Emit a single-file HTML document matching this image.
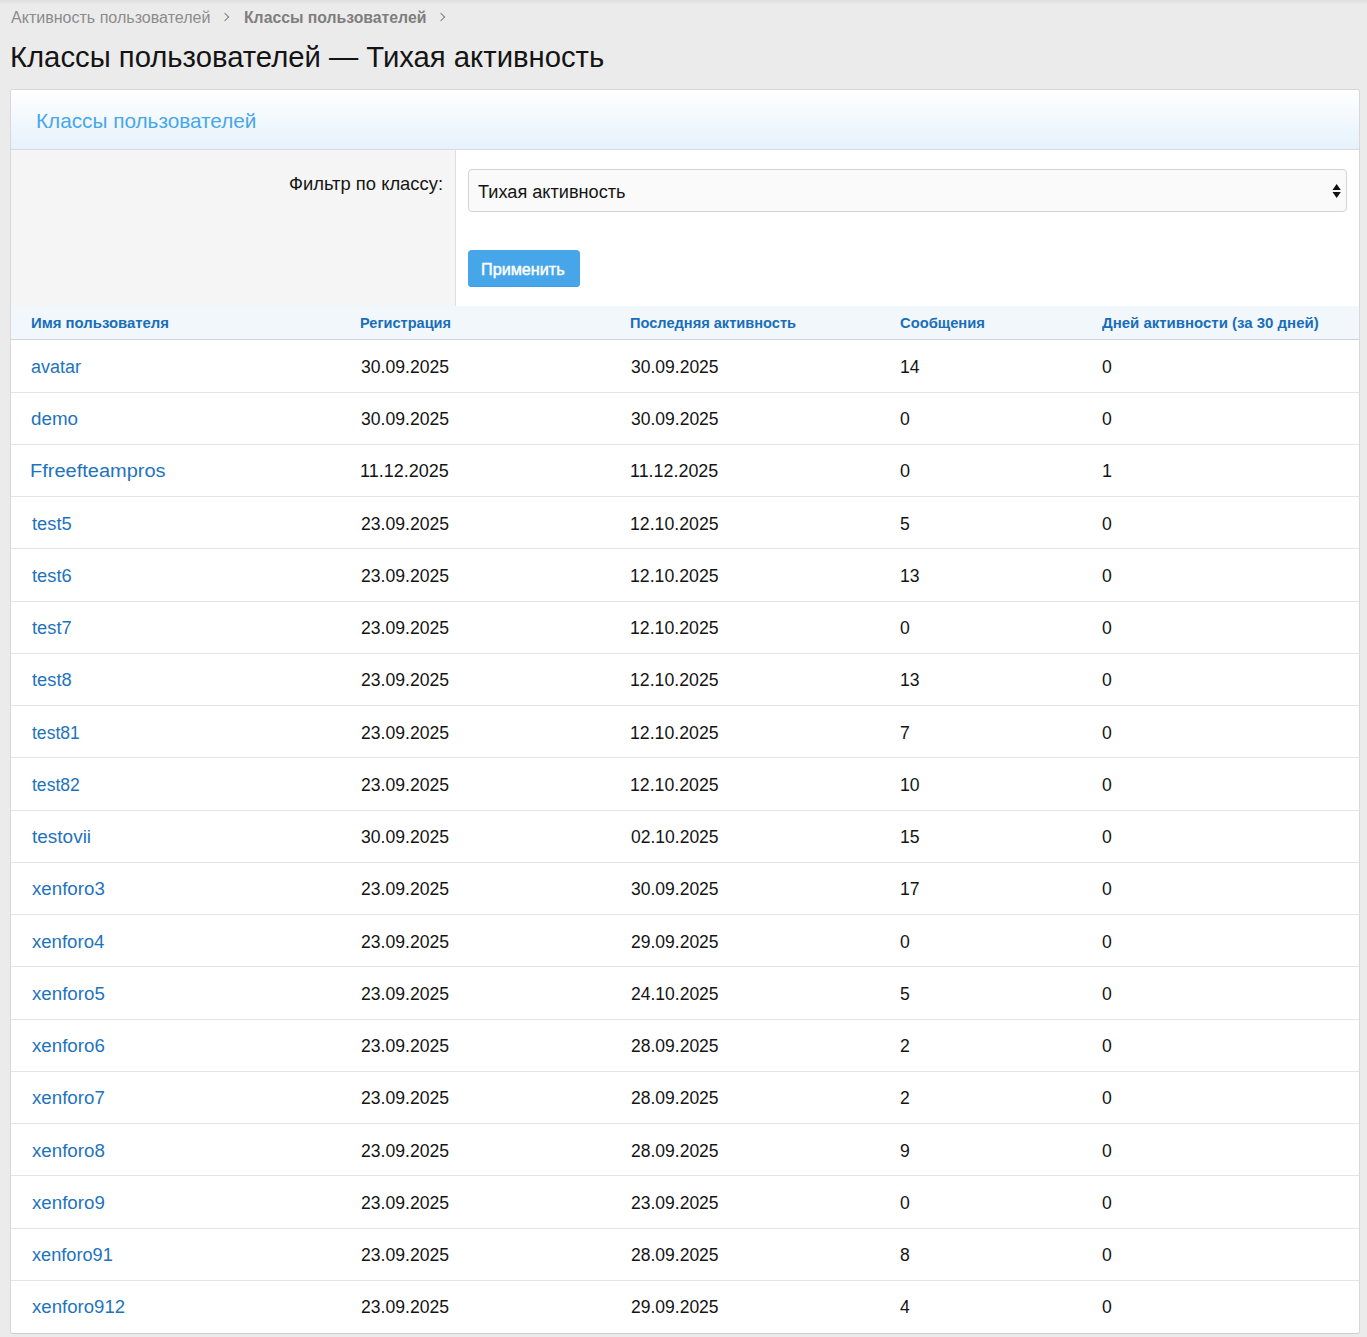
<!DOCTYPE html><html><head><meta charset="utf-8"><style>
*{box-sizing:border-box;margin:0;padding:0}
html,body{width:1367px;height:1337px;overflow:hidden}
body{background:#ebebeb;font-family:"Liberation Sans",sans-serif;color:#141414;position:relative}
.a{position:absolute;white-space:nowrap;line-height:1;transform-origin:0 0}
.topsh{position:absolute;left:0;top:0;width:1367px;height:5px;background:linear-gradient(rgba(0,0,0,.055),rgba(0,0,0,0))}
.crumb{color:#8c8c8c}
.crumbb{color:#7e7e7e;font-weight:bold}
.chev{position:absolute;width:6px;height:6px;border-right:1.6px solid #808080;border-top:1.6px solid #808080;transform:rotate(45deg)}
.title{color:#141414}
.block{position:absolute;left:10px;top:89px;width:1350px;height:1245px;border:1px solid #d8d8d8;border-bottom-color:#cdcdcd;border-radius:3px;background:#fff;overflow:hidden}
.hdr{position:absolute;left:0;top:0;width:1348px;height:60px;background:linear-gradient(#fefefe 4%,#e5f2fc 100%);border-bottom:1px solid #dadada}
.hdrt{color:#47a7eb}
.lab{position:absolute;left:0;top:60px;width:445px;height:156px;background:#f5f5f5;border-right:1px solid #dedede}
.labt{color:#141414}
.sel{position:absolute;left:457px;top:79px;width:879px;height:43px;background:#fafafa;border:1px solid #d3d3d3;border-radius:4px}
.selt{color:#141414}
.btn{position:absolute;left:457px;top:160px;width:112px;height:37px;background:#47a6ea;border-radius:4px;box-shadow:inset 0 -1px 0 #3a9de8}
.btnt{color:#fff;-webkit-text-stroke:0.45px #fff}
.th{position:absolute;left:0;top:216px;width:1348px;height:34px;background:#f2f7fc;border-bottom:1px solid #d3d3d3}
.tht{color:#186eb9;font-weight:bold}
.rl{position:absolute;left:0;width:1348px;height:1px;background:#e5e5e5}
.td{color:#141414}
.lnk{color:#1e73bd}
</style></head><body>
<div class="topsh"></div>
<div class="chev" style="left:222px;top:14px"></div>
<div class="chev" style="left:438px;top:14px"></div>
<div class="block">
<div class="hdr"></div>
<div class="lab"></div>
<div class="sel"><svg style="position:absolute;left:862px;top:13px" width="12" height="16" viewBox="0 0 12 16"><path d="M5.65 0.9 L9.8 6.9 H1.5 Z M1.5 8.9 H9.8 L5.65 14.9 Z" fill="#111"/></svg></div>
<div class="btn"></div>
<div class="th"></div>
<div class="rl" style="top:302px"></div>
<div class="rl" style="top:354px"></div>
<div class="rl" style="top:406px"></div>
<div class="rl" style="top:458px"></div>
<div class="rl" style="top:511px"></div>
<div class="rl" style="top:563px"></div>
<div class="rl" style="top:615px"></div>
<div class="rl" style="top:667px"></div>
<div class="rl" style="top:720px"></div>
<div class="rl" style="top:772px"></div>
<div class="rl" style="top:824px"></div>
<div class="rl" style="top:876px"></div>
<div class="rl" style="top:929px"></div>
<div class="rl" style="top:981px"></div>
<div class="rl" style="top:1033px"></div>
<div class="rl" style="top:1085px"></div>
<div class="rl" style="top:1138px"></div>
<div class="rl" style="top:1190px"></div>
</div>
<div id="crumb1" class="a crumb" style="left:10.50px;top:9.90px;font-size:16px;transform:scaleX(1.0025);">Активность пользователей</div>
<div id="crumb2" class="a crumbb" style="left:244.01px;top:9.80px;font-size:16px;transform:scaleX(0.9855);">Классы пользователей</div>
<div id="title" class="a title" style="left:9.68px;top:43.00px;font-size:29px;transform:scaleX(1.0089);">Классы пользователей — Тихая активность</div>
<div id="hdrt" class="a hdrt" style="left:35.69px;top:110.00px;font-size:21px;transform:scaleX(0.9881);">Классы пользователей</div>
<div id="label" class="a labt" style="left:289.00px;top:174.60px;font-size:18.5px;transform:scaleX(0.9935);">Фильтр по классу:</div>
<div id="selt" class="a selt" style="left:477.60px;top:183.00px;font-size:18px;transform:scaleX(1.0080);">Тихая активность</div>
<div id="btnt" class="a btnt" style="left:481.49px;top:262.00px;font-size:16px;transform:scaleX(1.0122);">Применить</div>
<div id="th1" class="a tht" style="left:30.65px;top:315.00px;font-size:15.5px;transform:scaleX(0.9607);">Имя пользователя</div>
<div id="th2" class="a tht" style="left:360.40px;top:315.00px;font-size:15.5px;transform:scaleX(0.9386);">Регистрация</div>
<div id="th3" class="a tht" style="left:630.05px;top:315.00px;font-size:15.5px;transform:scaleX(0.9420);">Последняя активность</div>
<div id="th4" class="a tht" style="left:900.00px;top:315.00px;font-size:15.5px;transform:scaleX(0.9503);">Сообщения</div>
<div id="th5" class="a tht" style="left:1102.00px;top:315.00px;font-size:15.5px;transform:scaleX(0.9664);">Дней активности (за 30 дней)</div>
<div id="r0c0" class="a td lnk" style="left:31.00px;top:357.75px;font-size:18px;">avatar</div>
<div id="r0c1" class="a td" style="left:361.00px;top:357.75px;font-size:18px;transform:scaleX(0.9778);">30.09.2025</div>
<div id="r0c2" class="a td" style="left:630.50px;top:357.75px;font-size:18px;transform:scaleX(0.9722);">30.09.2025</div>
<div id="r0c3" class="a td" style="left:900.00px;top:357.75px;font-size:18px;transform:scaleX(0.9778);">14</div>
<div id="r0c4" class="a td" style="left:1102.00px;top:357.75px;font-size:18px;transform:scaleX(0.9778);">0</div>
<div id="r1c0" class="a td lnk" style="left:31.49px;top:410.00px;font-size:18px;transform:scaleX(1.0432);">demo</div>
<div id="r1c1" class="a td" style="left:361.00px;top:410.00px;font-size:18px;transform:scaleX(0.9778);">30.09.2025</div>
<div id="r1c2" class="a td" style="left:630.50px;top:410.00px;font-size:18px;transform:scaleX(0.9722);">30.09.2025</div>
<div id="r1c3" class="a td" style="left:900.00px;top:410.00px;font-size:18px;transform:scaleX(0.9778);">0</div>
<div id="r1c4" class="a td" style="left:1102.00px;top:410.00px;font-size:18px;transform:scaleX(0.9778);">0</div>
<div id="r2c0" class="a td lnk" style="left:30.37px;top:462.00px;font-size:18px;transform:scaleX(1.1106);">Ffreefteampros</div>
<div id="r2c1" class="a td" style="left:360.02px;top:462.00px;font-size:18px;">11.12.2025</div>
<div id="r2c2" class="a td" style="left:629.52px;top:462.00px;font-size:18px;transform:scaleX(0.9944);">11.12.2025</div>
<div id="r2c3" class="a td" style="left:900.00px;top:462.00px;font-size:18px;">0</div>
<div id="r2c4" class="a td" style="left:1102.00px;top:462.00px;font-size:18px;">1</div>
<div id="r3c0" class="a td lnk" style="left:31.51px;top:514.50px;font-size:18px;transform:scaleX(1.0165);">test5</div>
<div id="r3c1" class="a td" style="left:361.00px;top:514.50px;font-size:18px;transform:scaleX(0.9778);">23.09.2025</div>
<div id="r3c2" class="a td" style="left:629.54px;top:514.50px;font-size:18px;transform:scaleX(0.9832);">12.10.2025</div>
<div id="r3c3" class="a td" style="left:900.00px;top:514.50px;font-size:18px;transform:scaleX(0.9778);">5</div>
<div id="r3c4" class="a td" style="left:1102.00px;top:514.50px;font-size:18px;transform:scaleX(0.9778);">0</div>
<div id="r4c0" class="a td lnk" style="left:31.51px;top:566.75px;font-size:18px;transform:scaleX(1.0165);">test6</div>
<div id="r4c1" class="a td" style="left:361.00px;top:566.75px;font-size:18px;transform:scaleX(0.9778);">23.09.2025</div>
<div id="r4c2" class="a td" style="left:629.54px;top:566.75px;font-size:18px;transform:scaleX(0.9832);">12.10.2025</div>
<div id="r4c3" class="a td" style="left:900.00px;top:566.75px;font-size:18px;transform:scaleX(0.9778);">13</div>
<div id="r4c4" class="a td" style="left:1102.00px;top:566.75px;font-size:18px;transform:scaleX(0.9778);">0</div>
<div id="r5c0" class="a td lnk" style="left:31.51px;top:619.00px;font-size:18px;transform:scaleX(1.0165);">test7</div>
<div id="r5c1" class="a td" style="left:361.00px;top:619.00px;font-size:18px;transform:scaleX(0.9778);">23.09.2025</div>
<div id="r5c2" class="a td" style="left:629.54px;top:619.00px;font-size:18px;transform:scaleX(0.9832);">12.10.2025</div>
<div id="r5c3" class="a td" style="left:900.00px;top:619.00px;font-size:18px;transform:scaleX(0.9778);">0</div>
<div id="r5c4" class="a td" style="left:1102.00px;top:619.00px;font-size:18px;transform:scaleX(0.9778);">0</div>
<div id="r6c0" class="a td lnk" style="left:31.51px;top:671.00px;font-size:18px;transform:scaleX(1.0165);">test8</div>
<div id="r6c1" class="a td" style="left:361.00px;top:671.00px;font-size:18px;transform:scaleX(0.9778);">23.09.2025</div>
<div id="r6c2" class="a td" style="left:629.54px;top:671.00px;font-size:18px;transform:scaleX(0.9832);">12.10.2025</div>
<div id="r6c3" class="a td" style="left:900.00px;top:671.00px;font-size:18px;transform:scaleX(0.9778);">13</div>
<div id="r6c4" class="a td" style="left:1102.00px;top:671.00px;font-size:18px;transform:scaleX(0.9778);">0</div>
<div id="r7c0" class="a td lnk" style="left:31.52px;top:723.50px;font-size:18px;transform:scaleX(0.9746);">test81</div>
<div id="r7c1" class="a td" style="left:361.00px;top:723.50px;font-size:18px;transform:scaleX(0.9778);">23.09.2025</div>
<div id="r7c2" class="a td" style="left:629.54px;top:723.50px;font-size:18px;transform:scaleX(0.9832);">12.10.2025</div>
<div id="r7c3" class="a td" style="left:900.00px;top:723.50px;font-size:18px;transform:scaleX(0.9778);">7</div>
<div id="r7c4" class="a td" style="left:1102.00px;top:723.50px;font-size:18px;transform:scaleX(0.9778);">0</div>
<div id="r8c0" class="a td lnk" style="left:31.52px;top:775.75px;font-size:18px;transform:scaleX(0.9746);">test82</div>
<div id="r8c1" class="a td" style="left:361.00px;top:775.75px;font-size:18px;transform:scaleX(0.9778);">23.09.2025</div>
<div id="r8c2" class="a td" style="left:629.54px;top:775.75px;font-size:18px;transform:scaleX(0.9832);">12.10.2025</div>
<div id="r8c3" class="a td" style="left:900.00px;top:775.75px;font-size:18px;transform:scaleX(0.9778);">10</div>
<div id="r8c4" class="a td" style="left:1102.00px;top:775.75px;font-size:18px;transform:scaleX(0.9778);">0</div>
<div id="r9c0" class="a td lnk" style="left:31.50px;top:828.00px;font-size:18px;transform:scaleX(1.0545);">testovii</div>
<div id="r9c1" class="a td" style="left:361.00px;top:828.00px;font-size:18px;transform:scaleX(0.9778);">30.09.2025</div>
<div id="r9c2" class="a td" style="left:630.50px;top:828.00px;font-size:18px;transform:scaleX(0.9722);">02.10.2025</div>
<div id="r9c3" class="a td" style="left:900.00px;top:828.00px;font-size:18px;transform:scaleX(0.9778);">15</div>
<div id="r9c4" class="a td" style="left:1102.00px;top:828.00px;font-size:18px;transform:scaleX(0.9778);">0</div>
<div id="r10c0" class="a td lnk" style="left:31.50px;top:880.00px;font-size:18px;transform:scaleX(1.0391);">xenforo3</div>
<div id="r10c1" class="a td" style="left:361.00px;top:880.00px;font-size:18px;transform:scaleX(0.9778);">23.09.2025</div>
<div id="r10c2" class="a td" style="left:630.50px;top:880.00px;font-size:18px;transform:scaleX(0.9722);">30.09.2025</div>
<div id="r10c3" class="a td" style="left:900.00px;top:880.00px;font-size:18px;transform:scaleX(0.9778);">17</div>
<div id="r10c4" class="a td" style="left:1102.00px;top:880.00px;font-size:18px;transform:scaleX(0.9778);">0</div>
<div id="r11c0" class="a td lnk" style="left:31.50px;top:932.50px;font-size:18px;transform:scaleX(1.0320);">xenforo4</div>
<div id="r11c1" class="a td" style="left:361.00px;top:932.50px;font-size:18px;transform:scaleX(0.9778);">23.09.2025</div>
<div id="r11c2" class="a td" style="left:630.50px;top:932.50px;font-size:18px;transform:scaleX(0.9722);">29.09.2025</div>
<div id="r11c3" class="a td" style="left:900.00px;top:932.50px;font-size:18px;transform:scaleX(0.9778);">0</div>
<div id="r11c4" class="a td" style="left:1102.00px;top:932.50px;font-size:18px;transform:scaleX(0.9778);">0</div>
<div id="r12c0" class="a td lnk" style="left:31.50px;top:984.75px;font-size:18px;transform:scaleX(1.0391);">xenforo5</div>
<div id="r12c1" class="a td" style="left:361.00px;top:984.75px;font-size:18px;transform:scaleX(0.9778);">23.09.2025</div>
<div id="r12c2" class="a td" style="left:630.50px;top:984.75px;font-size:18px;transform:scaleX(0.9722);">24.10.2025</div>
<div id="r12c3" class="a td" style="left:900.00px;top:984.75px;font-size:18px;transform:scaleX(0.9778);">5</div>
<div id="r12c4" class="a td" style="left:1102.00px;top:984.75px;font-size:18px;transform:scaleX(0.9778);">0</div>
<div id="r13c0" class="a td lnk" style="left:31.50px;top:1037.00px;font-size:18px;transform:scaleX(1.0391);">xenforo6</div>
<div id="r13c1" class="a td" style="left:361.00px;top:1037.00px;font-size:18px;transform:scaleX(0.9778);">23.09.2025</div>
<div id="r13c2" class="a td" style="left:630.50px;top:1037.00px;font-size:18px;transform:scaleX(0.9722);">28.09.2025</div>
<div id="r13c3" class="a td" style="left:900.00px;top:1037.00px;font-size:18px;transform:scaleX(0.9778);">2</div>
<div id="r13c4" class="a td" style="left:1102.00px;top:1037.00px;font-size:18px;transform:scaleX(0.9778);">0</div>
<div id="r14c0" class="a td lnk" style="left:31.50px;top:1089.00px;font-size:18px;transform:scaleX(1.0391);">xenforo7</div>
<div id="r14c1" class="a td" style="left:361.00px;top:1089.00px;font-size:18px;transform:scaleX(0.9778);">23.09.2025</div>
<div id="r14c2" class="a td" style="left:630.50px;top:1089.00px;font-size:18px;transform:scaleX(0.9722);">28.09.2025</div>
<div id="r14c3" class="a td" style="left:900.00px;top:1089.00px;font-size:18px;transform:scaleX(0.9778);">2</div>
<div id="r14c4" class="a td" style="left:1102.00px;top:1089.00px;font-size:18px;transform:scaleX(0.9778);">0</div>
<div id="r15c0" class="a td lnk" style="left:31.50px;top:1141.50px;font-size:18px;transform:scaleX(1.0391);">xenforo8</div>
<div id="r15c1" class="a td" style="left:361.00px;top:1141.50px;font-size:18px;transform:scaleX(0.9778);">23.09.2025</div>
<div id="r15c2" class="a td" style="left:630.50px;top:1141.50px;font-size:18px;transform:scaleX(0.9722);">28.09.2025</div>
<div id="r15c3" class="a td" style="left:900.00px;top:1141.50px;font-size:18px;transform:scaleX(0.9778);">9</div>
<div id="r15c4" class="a td" style="left:1102.00px;top:1141.50px;font-size:18px;transform:scaleX(0.9778);">0</div>
<div id="r16c0" class="a td lnk" style="left:31.50px;top:1193.75px;font-size:18px;transform:scaleX(1.0391);">xenforo9</div>
<div id="r16c1" class="a td" style="left:361.00px;top:1193.75px;font-size:18px;transform:scaleX(0.9778);">23.09.2025</div>
<div id="r16c2" class="a td" style="left:630.50px;top:1193.75px;font-size:18px;transform:scaleX(0.9722);">23.09.2025</div>
<div id="r16c3" class="a td" style="left:900.00px;top:1193.75px;font-size:18px;transform:scaleX(0.9778);">0</div>
<div id="r16c4" class="a td" style="left:1102.00px;top:1193.75px;font-size:18px;transform:scaleX(0.9778);">0</div>
<div id="r17c0" class="a td lnk" style="left:31.50px;top:1246.00px;font-size:18px;transform:scaleX(1.0091);">xenforo91</div>
<div id="r17c1" class="a td" style="left:361.00px;top:1246.00px;font-size:18px;transform:scaleX(0.9778);">23.09.2025</div>
<div id="r17c2" class="a td" style="left:630.50px;top:1246.00px;font-size:18px;transform:scaleX(0.9722);">28.09.2025</div>
<div id="r17c3" class="a td" style="left:900.00px;top:1246.00px;font-size:18px;transform:scaleX(0.9778);">8</div>
<div id="r17c4" class="a td" style="left:1102.00px;top:1246.00px;font-size:18px;transform:scaleX(0.9778);">0</div>
<div id="r18c0" class="a td lnk" style="left:31.50px;top:1298.25px;font-size:18px;transform:scaleX(1.0333);">xenforo912</div>
<div id="r18c1" class="a td" style="left:361.00px;top:1298.25px;font-size:18px;transform:scaleX(0.9778);">23.09.2025</div>
<div id="r18c2" class="a td" style="left:630.50px;top:1298.25px;font-size:18px;transform:scaleX(0.9722);">29.09.2025</div>
<div id="r18c3" class="a td" style="left:900.00px;top:1298.25px;font-size:18px;transform:scaleX(0.9778);">4</div>
<div id="r18c4" class="a td" style="left:1102.00px;top:1298.25px;font-size:18px;transform:scaleX(0.9778);">0</div>
</body></html>
